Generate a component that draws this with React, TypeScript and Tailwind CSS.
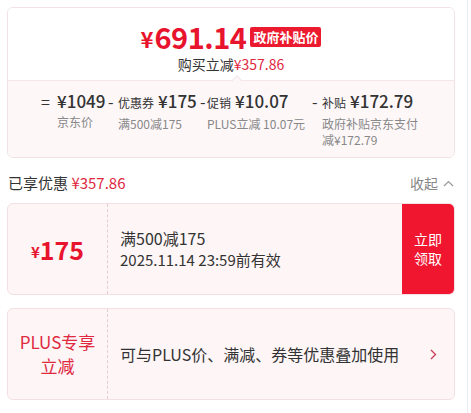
import React from "react";

const F = { fontFamily: '"Noto Sans CJK SC", "Noto Sans", sans-serif' };

function Item({ sign, signW, w, name, amount, desc, nowrap }: { sign: string; signW: string; w: string; name?: string; amount: string; desc: React.ReactNode; nowrap?: boolean }) {
  return (
    <div className={`flex items-start shrink-0 ${w}`}>
      <span className={`text-[16px] leading-[24px] text-[#333] shrink-0 ${signW}`}>{sign}</span>
      <div className="flex flex-col">
        <div className="flex items-baseline leading-[24px] whitespace-nowrap">
          {name && <span className="text-[12px] text-[#333] mr-[4px]">{name}</span>}
          <span className="text-[17px] font-medium text-[#333]">{amount}</span>
        </div>
        <div className={`text-[12px] leading-[16px] text-[#888] mt-[1px] ${nowrap ? "whitespace-nowrap" : "max-w-[100px]"}`}>{desc}</div>
      </div>
    </div>
  );
}

export default function App() {
  return (
    <div className="w-[471px] h-[413px] bg-white flex" style={F}>
      <div className="w-[467px] pl-[7px] pr-[12px] pt-[7px]">
        <div className="border border-[#f2e2e5] rounded-[6px] overflow-hidden">
          <div className="h-[72px] bg-white flex flex-col items-center pt-[9px] relative">
            <div className="flex items-center h-[38px]">
              <span className="text-[#e8142d] font-bold text-[22px] leading-none mt-[4px] mr-[1px]">¥</span>
              <span className="text-[#e8142d] font-bold text-[29px] leading-none tracking-[-0.5px]">691.14</span>
              <span className="ml-[4px] bg-[#ec1a2e] text-white font-bold text-[13px] leading-[20px] px-[3px] rounded-[2px] relative top-[1px]">政府补贴价</span>
            </div>
            <div className="text-[14px] leading-[18px]">
              <span className="text-[#333]">购买立减</span>
              <span className="text-[#e0283f]">¥357.86</span>
            </div>
            <div className="absolute left-[225px] bottom-[-5px] w-[8px] h-[8px] bg-[#fdf7f8] border-l border-t border-[#f4e6e9] rotate-45" />
          </div>
          <div className="bg-[#fdf7f8] border-t border-[#f4e6e9] h-[77px] pt-[8px] pl-[33px] flex">
            <Item sign="=" signW="w-[16px]" w="w-[67px]" amount="¥1049" desc="京东价" />
            <Item sign="-" signW="w-[10px]" w="w-[92px]" name="优惠券" amount="¥175" desc="满500减175" />
            <Item sign="-" signW="w-[7px]" w="w-[112px]" name="促销" amount="¥10.07" desc="PLUS立减 10.07元" nowrap />
            <Item sign="-" signW="w-[10px]" w="w-[120px]" name="补贴" amount="¥172.79" desc="政府补贴京东支付减¥172.79" />
          </div>
        </div>

        <div className="flex items-center justify-between mt-[15px] h-[20px] pl-[1px]">
          <div className="text-[15px] leading-[20px]">
            <span className="text-[#333]">已享优惠 </span>
            <span className="text-[#e0283f]">¥357.86</span>
          </div>
          <div className="flex items-center text-[14px] text-[#888] gap-[5px] pr-[1px]">
            <span>收起</span>
            <svg width="11" height="7" viewBox="0 0 11 7" fill="none">
              <path d="M1 6L5.5 1.5L10 6" stroke="#999" strokeWidth="1.2" />
            </svg>
          </div>
        </div>

        <div className="mt-[10px] h-[92px] flex border border-[#f3e0e4] bg-[#fdf5f6] rounded-[6px] overflow-hidden">
          <div className="w-[100px] border-r border-dashed border-[#e6cdd3] flex items-center justify-center text-[#e8142d] font-bold">
            <span className="text-[15px] mt-[6px]">¥</span>
            <span className="text-[25px] leading-none">175</span>
          </div>
          <div className="flex-1 flex flex-col justify-center pl-[12px] text-[#333]">
            <div className="text-[16px] leading-[21px]">满500减175</div>
            <div className="text-[15px] leading-[21px]">2025.11.14 23:59前有效</div>
          </div>
          <div className="w-[52px] bg-[#f0162f] text-white text-[14px] leading-[19px] flex items-center justify-center text-center">
            <div>立即<br />领取</div>
          </div>
        </div>

        <div className="mt-[13px] h-[92px] flex border border-[#f3e0e4] bg-[#fdf5f6] rounded-[6px] overflow-hidden">
          <div className="w-[100px] border-r border-dashed border-[#e6cdd3] flex items-center justify-center text-[#e0283f] text-[17px] leading-[24px] text-center">
            <div>PLUS专享<br />立减</div>
          </div>
          <div className="flex-1 flex items-center pl-[12px] text-[#333] text-[16px]">
            可与PLUS价、满减、券等优惠叠加使用
          </div>
          <div className="w-[42px] flex items-center justify-center">
            <svg width="7" height="11" viewBox="0 0 7 11" fill="none">
              <path d="M1 1L5.5 5.5L1 10" stroke="#c93a55" strokeWidth="1.3" />
            </svg>
          </div>
        </div>
      </div>
      <div className="w-[4px] border-l border-[#e9edf1]" />
    </div>
  );
}
